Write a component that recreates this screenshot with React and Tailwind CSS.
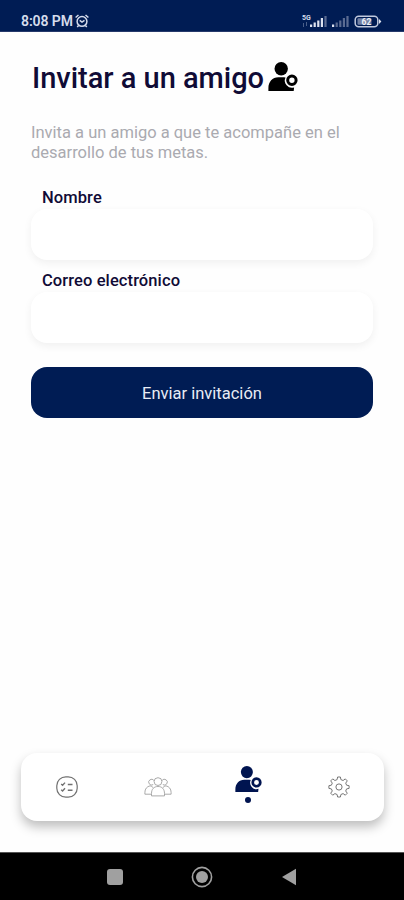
function InviteIcon({ className }) {
  return (
    <svg viewBox="0 0 30 30" className={className} fill="currentColor">
      <circle cx="13.2" cy="6.8" r="6.7" />
      <path d="M.4 29V26c0-6.2 4-10.8 10-10.8h5.4l1.7.3a7.2 7.2 0 0 0 8.6 9.9l-.4 3.6z" />
      <circle cx="23.9" cy="18.3" r="4.2" fill="white" stroke="currentColor" strokeWidth="3" />
    </svg>
  );
}

function ChecklistIcon() {
  return (
    <svg viewBox="0 0 22 22" className="h-[22px] w-[22px]" fill="none" stroke="#717171">
      <rect x=".8" y=".8" width="20.4" height="20.4" rx="9" strokeWidth="1.2" />
      <path d="M5.2 8l1.4 1.3L9 6.6M5.2 13.7L6.6 15 9 12.3M11.8 8.5h4.7M11.8 14.2h4.7" strokeWidth="1.4" />
    </svg>
  );
}

function GroupIcon() {
  return (
    <svg viewBox="0 0 28 22" className="h-[22px] w-7" fill="none" stroke="#a0a0a0" strokeWidth=".9">
      <circle cx="14" cy="5.6" r="3.9" />
      <path d="M7.5 19.9v-2.4c0-4.4 2.4-7 6.5-7s6.5 2.6 6.5 7v2.4z" />
      <path d="M9.2 8.6a2.9 2.9 0 1 1 .7-4.2M18.8 8.6a2.9 2.9 0 1 0-.7-4.2" />
      <path d="M9.2 11.6c-1-.9-2-1.4-3.1-1.8-3.2.7-5.2 3.1-5.2 6.5v1.9h6.5M18.8 11.6c1-.9 2-1.4 3.1-1.8 3.2.7 5.2 3.1 5.2 6.5v1.9h-6.5" />
    </svg>
  );
}

function GearIcon() {
  return (
    <svg viewBox="0 0 22 22" className="h-[22px] w-[22px]" fill="none" stroke="#777777" strokeWidth="1">
      <path
        strokeLinejoin="round"
        d="M9.6 1h2.8l.5 2.6 2.2.9 2.2-1.6 2 2-1.6 2.2.9 2.1 2.5.5v2.7l-2.5.5-.9 2.1 1.6 2.2-2 2-2.2-1.6-2.2.9-.5 2.5H9.6l-.5-2.5-2.2-.9-2.2 1.6-2-2L4.3 15l-.9-2.1-2.5-.5V9.7l2.5-.5.9-2.1-1.6-2.2 2-2 2.2 1.6 2.2-.9z"
      />
      <circle cx="11" cy="11" r="3.1" />
    </svg>
  );
}

function AlarmIcon() {
  return (
    <svg viewBox="0 0 14 14" className="ml-0.5 h-3.5 w-3.5" fill="none" stroke="#d5dcec" strokeWidth="1.5">
      <circle cx="7" cy="7.4" r="4.9" />
      <path d="M4.7 6.4L7 8l2.5-1.7M.6 3.5L3.5 1M13.4 3.5L10.5 1M3.6 11.5l-1.4 1.6M10.4 11.5l1.4 1.6" />
    </svg>
  );
}

function Signal({ bars, className }) {
  return (
    <svg viewBox="0 0 18 12" className={className}>
      {[2.5, 4.5, 6.5, 9, 11].map((h, i) => (
        <rect key={h} x={i * 3.6} y={12 - h} width="2.2" height={h} fill={i < bars ? '#dce2ef' : '#5a6b92'} />
      ))}
    </svg>
  );
}

function StatusBar() {
  return (
    <header className="flex h-8 shrink-0 justify-between border-b border-[#26396b] bg-[#001c54] pr-[22px] pl-[21px] pt-[11px] text-[#d5dcec]">
      <div className="flex h-5 items-center">
        <span className="text-[14px] font-semibold tracking-[-0.1px]">8:08 PM</span>
        <AlarmIcon />
      </div>
      <div className="flex h-5 items-center">
        <div className="flex h-3 w-2 flex-col items-start">
          <span className="text-[7px] leading-[6px] font-bold">5G</span>
          <svg viewBox="0 0 6 5" className="mt-px h-[5px] w-1.5 opacity-35" fill="none" stroke="currentColor">
            <path d="M1.5 5V1M4.5 0v4" />
          </svg>
        </div>
        <Signal bars={4} className="h-[12px] w-[18px]" />
        <Signal bars={1} className="ml-1 h-[12px] w-[18px]" />
        <svg viewBox="0 0 28 13" className="ml-1 h-[13px] w-7">
          <rect x="1.2" y="1.2" width="22.6" height="10.6" rx="3.5" fill="none" stroke="#c0c9de" strokeWidth="1.5" />
          <rect x="3.5" y="3.3" width="14" height="6.4" rx="1" fill="#7180a4" />
          <path d="M25 4l2.4 2.5L25 9z" fill="#dce2ef" />
          <text x="12.5" y="9.5" textAnchor="middle" fontSize="8.5" fontWeight="700" fill="#eef1f7">62</text>
        </svg>
      </div>
    </header>
  );
}

function Field({ label }) {
  return (
    <label className="block">
      <span className="block h-6 pl-[11px] text-[16.5px] leading-[25px] font-medium tracking-[0.1px] text-[#100b36]">{label}</span>
      <input className="block h-[51px] w-full rounded-2xl bg-white px-4 shadow-[0_3px_8px_rgba(0,0,0,0.06)] outline-none" />
    </label>
  );
}

function TabBar() {
  return (
    <nav className="mr-5 mb-[31px] ml-[21px] grid h-[68px] shrink-0 grid-cols-4 items-center justify-items-center rounded-2xl bg-white pl-px shadow-[0_6px_11px_rgba(0,0,0,0.25)]">
      <button><ChecklistIcon /></button>
      <button><GroupIcon /></button>
      <button className="flex flex-col items-center pb-[5px] text-[#001450]">
        <InviteIcon className="h-[27px] w-[27px]" />
        <span className="mt-1 h-1.5 w-1.5 rounded-full bg-[#001450]" />
      </button>
      <button><GearIcon /></button>
    </nav>
  );
}

function SystemBar() {
  return (
    <footer className="flex h-12 shrink-0 items-center justify-between border-t border-[#555] bg-black px-[107px] text-[#a0a0a0]">
      <span className="h-4 w-4 rounded-[3px] bg-[#a0a0a0]" />
      <svg viewBox="0 0 22 22" className="h-[22px] w-[22px]">
        <circle cx="11" cy="11" r="9.6" fill="none" stroke="currentColor" strokeWidth="1.6" />
        <circle cx="11" cy="11" r="6" fill="currentColor" />
      </svg>
      <svg viewBox="0 0 16 18" className="h-[18px] w-4" fill="currentColor">
        <path d="M1 9L15 .8v16.4z" />
      </svg>
    </footer>
  );
}

export default function App() {
  return (
    <div className="flex h-[900px] w-[404px] flex-col overflow-hidden bg-[#fefefe] font-['Roboto',sans-serif]">
      <StatusBar />
      <main className="flex-1 px-[31px]">
        <div className="flex h-[91px] items-center gap-1 pl-px">
          <h1 className="pt-[3px] text-[29px] font-medium tracking-[-0.02px] whitespace-nowrap text-[#100b36]">Invitar a un amigo</h1>
          <InviteIcon className="mb-0.5 h-[30px] w-[30px] text-black" />
        </div>
        <p className="text-[16.5px] leading-[19.5px] text-[#aaaab0]">
          Invita a un amigo a que te acompañe en el desarrollo de tus metas.
        </p>
        <form className="mt-[23px] flex flex-col gap-2" onSubmit={e => e.preventDefault()}>
          <Field label="Nombre" />
          <Field label="Correo electrónico" />
          <button className="mt-4 h-[51px] rounded-2xl bg-[#001c54] pt-[3px] text-[16.5px] text-[#e8ecf5]">
            Enviar invitación
          </button>
        </form>
      </main>
      <TabBar />
      <SystemBar />
    </div>
  );
}
